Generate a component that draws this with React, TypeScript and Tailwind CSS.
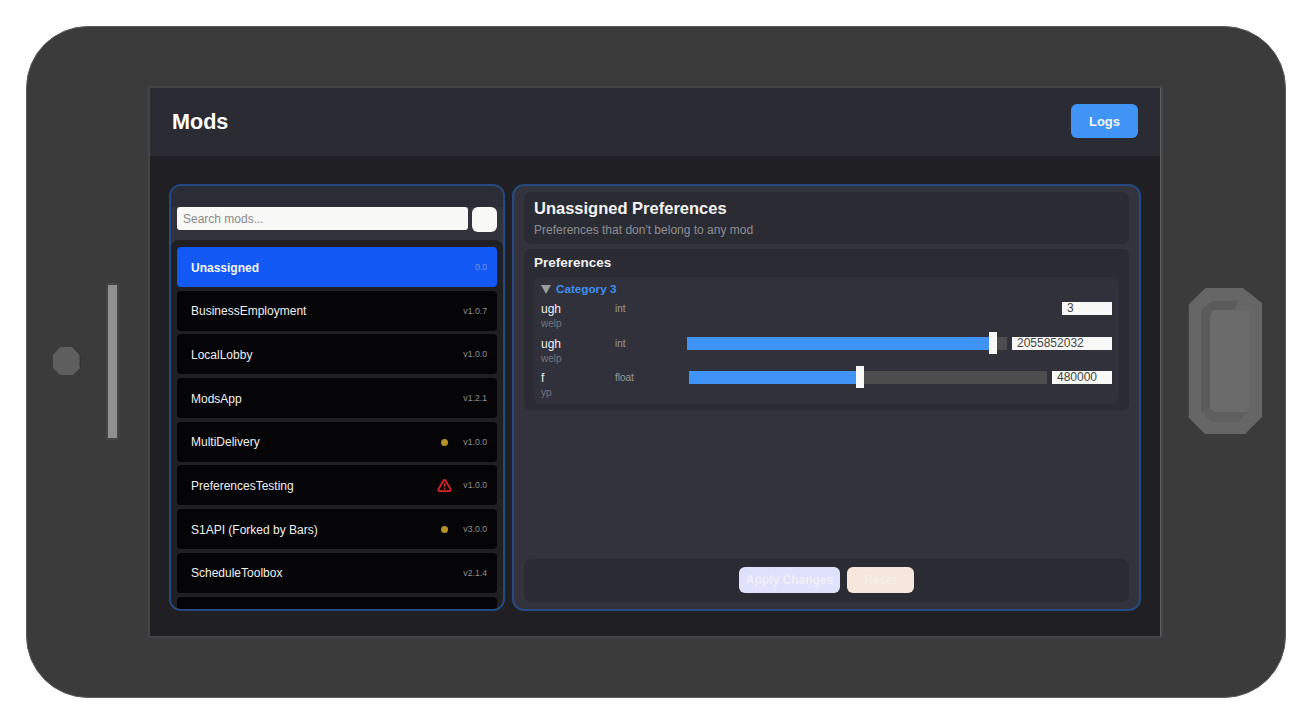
import React from "react";
import { TriangleAlert } from "lucide-react";

const mods: { name: string; ver: string; mark?: "dot" | "warn" }[] = [
  { name: "BusinessEmployment", ver: "v1.0.7" },
  { name: "LocalLobby", ver: "v1.0.0" },
  { name: "ModsApp", ver: "v1.2.1" },
  { name: "MultiDelivery", ver: "v1.0.0", mark: "dot" },
  { name: "PreferencesTesting", ver: "v1.0.0", mark: "warn" },
  { name: "S1API (Forked by Bars)", ver: "v3.0.0", mark: "dot" },
  { name: "ScheduleToolbox", ver: "v2.1.4" },
];

function Row({ name, ver, mark }: { name: string; ver: string; mark?: "dot" | "warn" }) {
  return (
    <div className="h-[40px] shrink-0 flex items-center rounded-[4px] bg-[#050507] pl-[14px] pr-[10px] pt-[1px]">
      <span className="flex-1 text-[12px] text-[#f0f0f0]">{name}</span>
      {mark === "dot" && <span className="w-[7px] h-[7px] rounded-full bg-[#b8902a] mr-[15px]" />}
      {mark === "warn" && <TriangleAlert className="w-[15px] h-[15px] text-[#dc2626] mr-[11px]" strokeWidth={2.6} />}
      <span className="text-[8.7px] text-[#8f8f8f] w-[24px] text-right whitespace-nowrap">{ver}</span>
    </div>
  );
}

function Pref({ rowH, name, desc, type, value, inputW, sliderW, fill, thumbH }: { rowH: string; name: string; desc: string; type: string; value: string; inputW: string; sliderW?: string; fill?: string; thumbH?: string }) {
  return (
    <div className={`flex items-start ${rowH}`}>
      <div className="w-[74px] shrink-0">
        <div className="text-[12px] leading-[14px] text-[#f0f0f0]">{name}</div>
        <div className="text-[10px] leading-[14px] mt-[1px] text-[#77777d]">{desc}</div>
      </div>
      <div className="text-[10px] leading-[14px] text-[#9a9a9a]">{type}</div>
      <div className="flex-1 flex justify-end items-center h-[13px] gap-[5px]">
        {sliderW && (
          <div className={`relative h-[13px] bg-[#4d4d4d] ${sliderW}`}>
            <div className={`h-full bg-[#3f94f6] ${fill}`} />
            <div className={`absolute top-[-5px] w-[8px] h-[22px] bg-[#f8f8f6] ${thumbH}`} />
          </div>
        )}
        <div className={`h-[13px] bg-[#f8f8f6] pl-[5px] text-[12px] leading-[13px] text-[#444] ${inputW}`}>{value}</div>
      </div>
    </div>
  );
}

export default function App() {
  return (
    <div className="w-[1310px] h-[725px] bg-white overflow-hidden pt-[26px] pl-[26px] font-['Liberation_Sans',Arial,sans-serif]">
      <div className="w-[1260px] h-[672px] rounded-[62px] bg-[#3b3b3b] border border-[#5a5c5c] flex items-start">
        <div className="w-[123px] h-full shrink-0 flex items-start">
          <svg viewBox="0 0 28 28" className="w-[28px] h-[28px] mt-[320px] ml-[26px]">
            <polygon points="7,0 20,0 27,8 27,21 20,28 7,28 0,21 0,8" fill="#5e5e5e" />
            <polyline points="20,0 27,8 27,20" fill="none" stroke="#2a2a2a" strokeWidth="0.8" />
          </svg>
          <div className="w-[9px] h-[153px] mt-[258px] ml-[27px] bg-[#8f908f] shadow-[0_0_0_2px_#454545]" />
        </div>
        <div className="w-[1011px] h-[548px] mt-[61px] shrink-0 bg-[#1f1f24] border-r border-[#5f6062] shadow-[0_0_0_2px_#444646] flex flex-col">
          <div className="h-[68px] shrink-0 bg-[#2a2b33] flex items-center justify-between pl-[22px] pr-[22px]">
            <h1 className="text-[21.6px] font-bold text-white pt-[1px]">Mods</h1>
            <button className="w-[67px] h-[34px] rounded-[6px] bg-[#3f94f6] text-[13px] font-bold text-[#f4f6fb] mb-[2px] pt-[1px]">Logs</button>
          </div>
          <div className="flex-1 flex gap-[7px] pt-[28px] pl-[19px] pr-[19px] pb-[25px] min-h-0">
            <div className="w-[336px] h-full shrink-0 rounded-[12px] border-2 border-[#254a80] bg-[#32333d] overflow-hidden flex flex-col">
              <div className="h-[21px] shrink-0 bg-[#2b2c35]" />
              <div className="h-[33px] shrink-0 flex items-start gap-[4px] pl-[6px] pr-[6px]">
                <div className="w-[291px] h-[23px] rounded-[3px] bg-[#f8f8f6] pl-[6px] text-[12px] leading-[24px] text-[#8a8a8a]">Search mods...</div>
                <button className="w-[25px] h-[25px] rounded-[6px] bg-[#f8f8f6]" />
              </div>
              <div className="flex-1 min-h-0 rounded-t-[8px] bg-[#1f1f24] pt-[7px] pl-[6px] pr-[6px] flex flex-col gap-[3.7px] overflow-hidden">
                <div className="h-[40px] shrink-0 flex items-center rounded-[4px] bg-[#1259f5] pl-[14px] pr-[10px] pt-[1px]">
                  <span className="flex-1 text-[12px] font-bold text-[#f4f6fb]">Unassigned</span>
                  <span className="text-[8.7px] text-[#7d8fe0]">0.0</span>
                </div>
                {mods.map((m) => (
                  <Row key={m.name} {...m} />
                ))}
                <div className="h-[40px] shrink-0 rounded-[4px] bg-[#050507]" />
              </div>
            </div>
            <div className="flex-1 h-full rounded-[12px] border-2 border-[#254a80] bg-[#32333d] pt-[6px] pb-[6px] pl-[10px] pr-[10px] flex flex-col">
              <div className="h-[52px] shrink-0 rounded-[8px] bg-[#2a2b33] pl-[10px] pt-[7px]">
                <h2 className="text-[16.5px] leading-[18px] font-bold text-[#f4f4f4]">Unassigned Preferences</h2>
                <p className="mt-[6px] text-[12px] leading-[14px] text-[#8e8e92]">Preferences that don't belong to any mod</p>
              </div>
              <div className="mt-[5px] h-[161px] shrink-0 rounded-[6px] bg-[#2a2b33] pt-[7px] px-[10px]">
                <h3 className="text-[13.5px] leading-[14px] font-bold text-[#f0f0f0]">Preferences</h3>
                <div className="mt-[7px] h-[127px] rounded-[6px] bg-[#30313a] pl-[7px] pr-[7px] pt-[5px]">
                  <div className="flex items-center h-[14px] gap-[5px]">
                    <span className="w-0 h-0 border-l-[5.5px] border-r-[5.5px] border-t-[9px] border-l-transparent border-r-transparent border-t-[#9c9c9c]" />
                    <span className="text-[11.7px] font-bold text-[#3f8fee]">Category 3</span>
                  </div>
                  <div className="mt-[6px]">
                    <Pref rowH="h-[35px]" name="ugh" desc="welp" type="int" value="3" inputW="w-[50px]" />
                    <Pref rowH="h-[34px]" name="ugh" desc="welp" type="int" value="2055852032" inputW="w-[100px]" sliderW="w-[320px]" fill="w-[303px]" thumbH="left-[302px]" />
                    <Pref rowH="h-[34px]" name="f" desc="yp" type="float" value="480000" inputW="w-[60px]" sliderW="w-[358px]" fill="w-[168px]" thumbH="left-[167px]" />
                  </div>
                </div>
              </div>
              <div className="flex-1" />
              <div className="h-[43px] shrink-0 rounded-[8px] bg-[#2a2b33] flex items-start justify-center gap-[7px] pt-[8px] mb-[1px]">
                <button className="w-[101px] h-[26px] rounded-[6px] bg-[#dfe1fd] text-[12px] font-bold text-[#f0f0f6]">Apply Changes</button>
                <button className="w-[67px] h-[26px] rounded-[6px] bg-[#f7e6db] text-[12px] font-bold text-[#f4efe9]">Reset</button>
              </div>
            </div>
          </div>
        </div>
        <div className="flex-1 h-full flex items-start pl-[27px]">
          <svg viewBox="0 0 74 146" className="w-[74px] h-[146px] mt-[261px]">
            <polygon points="17.5,0 55,0 74,15 74,129 57,146 17,146 0,129 0,17" fill="#656665" />
            <polygon points="24,13 50,13 47,22 25,22 22,29 22,119 13,124 13,22" fill="#5a5b5a" />
            <polygon points="13,124 22,119 26,124 60,124 50,134 24,134" fill="#5e5f5e" />
            <polygon points="22,29 25,22 62,22 62,120 58,124 26,124 22,119" fill="#6a6b6a" />
            <line x1="0" y1="17" x2="0" y2="129" stroke="#2a2c2e" strokeWidth="1.2" />
          </svg>
        </div>
      </div>
    </div>
  );
}
